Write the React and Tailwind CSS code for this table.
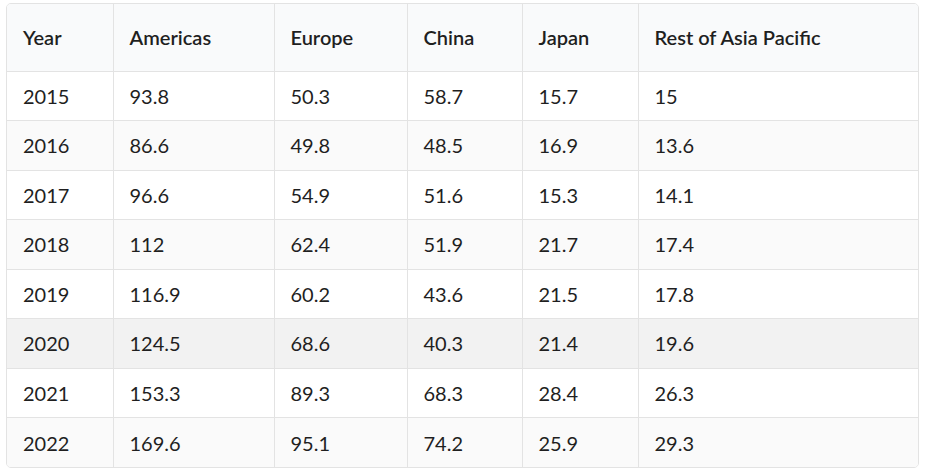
const rows = [
  ["2015", "93.8", "50.3", "58.7", "15.7", "15"],
  ["2016", "86.6", "49.8", "48.5", "16.9", "13.6"],
  ["2017", "96.6", "54.9", "51.6", "15.3", "14.1"],
  ["2018", "112", "62.4", "51.9", "21.7", "17.4"],
  ["2019", "116.9", "60.2", "43.6", "21.5", "17.8"],
  ["2020", "124.5", "68.6", "40.3", "21.4", "19.6"],
  ["2021", "153.3", "89.3", "68.3", "28.4", "26.3"],
  ["2022", "169.6", "95.1", "74.2", "25.9", "29.3"],
];

const headers = ["Year", "Americas", "Europe", "China", "Japan", "Rest of Asia Pacific"];
const widths = [106, 161, 133, 115, 116, 282];

export default function App() {
  return (
    <div className="bg-white w-[925px] h-[473px] pt-[3px] pl-[6px]" style={{ fontFamily: "Lato, 'Noto Sans', sans-serif" }}>
      <div className="w-[913px] border border-[#e3e3e3] rounded-[5px] overflow-hidden">
        <table className="table-fixed w-full border-collapse text-[20px] text-[#1f1f1f]">
          <colgroup>
            {widths.map((w, i) => (
              <col key={i} style={{ width: w }} />
            ))}
          </colgroup>
          <thead>
            <tr className="bg-[#f9fafb] h-[67px]">
              {headers.map((h, i) => (
                <th
                  key={h}
                  className={`text-left font-semibold px-4 border-[#e3e3e3] border-b ${i > 0 ? "border-l" : ""}`}
                >
                  {h}
                </th>
              ))}
            </tr>
          </thead>
          <tbody>
            {rows.map((r, ri) => (
              <tr
                key={r[0]}
                className={`h-[49.5px] ${
                  r[0] === "2020" ? "bg-[#f2f2f2]" : ri % 2 === 1 ? "bg-[#fafafa]" : "bg-white"
                }`}
              >
                {r.map((c, ci) => (
                  <td
                    key={ci}
                    className={`px-4 border-[#e3e3e3] ${ri < rows.length - 1 ? "border-b" : ""} ${ci > 0 ? "border-l" : ""}`}
                  >
                    {c}
                  </td>
                ))}
              </tr>
            ))}
          </tbody>
        </table>
      </div>
    </div>
  );
}
